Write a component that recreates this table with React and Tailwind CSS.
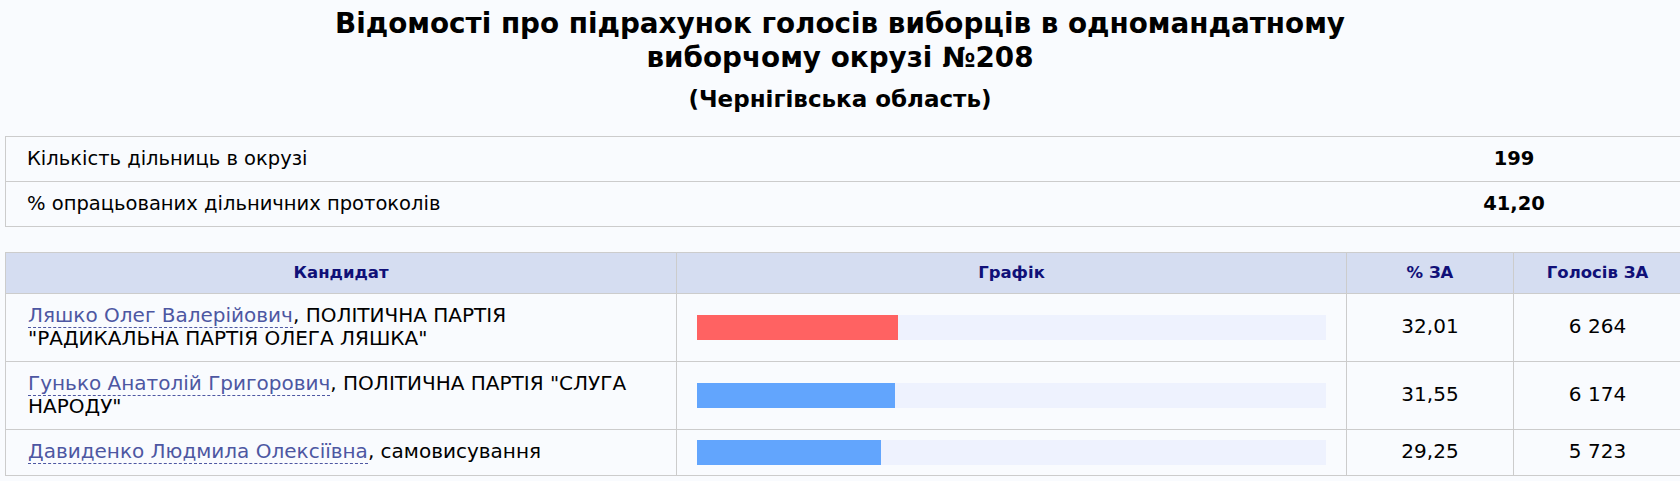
import React from 'react';

const candidates = [
  { name: 'Ляшко Олег Валерійович', party: 'ПОЛІТИЧНА ПАРТІЯ "РАДИКАЛЬНА ПАРТІЯ ОЛЕГА ЛЯШКА"', pct: 32.01, pctText: '32,01', votes: '6 264', color: 'bg-[#ff6262]' },
  { name: 'Гунько Анатолій Григорович', party: 'ПОЛІТИЧНА ПАРТІЯ "СЛУГА НАРОДУ"', pct: 31.55, pctText: '31,55', votes: '6 174', color: 'bg-[#62a5fd]' },
  { name: 'Давиденко Людмила Олексіївна', party: 'самовисування', pct: 29.25, pctText: '29,25', votes: '5 723', color: 'bg-[#62a5fd]' },
];

const App = () => {
  return (
    <div className="w-[1680px] min-h-screen overflow-hidden bg-[#f9fbfe] text-black font-['DejaVu_Sans',Verdana,sans-serif]">
      {/* Heading */}
      <h1 className="pt-[7px] text-center text-[27.8px] leading-[33.5px] font-bold">
        Відомості про підрахунок голосів виборців в одномандатному
        <br />
        виборчому окрузі №208
      </h1>
      <h2 className="mt-[13px] text-center text-[23px] leading-[24.5px] font-bold">(Чернігівська область)</h2>

      {/* Summary */}
      <table className="mt-[24px] ml-[5px] w-[1676px] table-fixed border-collapse text-[19.5px] leading-[24px]">
        <colgroup>
          <col className="w-[1341px]" />
          <col className="w-[335px]" />
        </colgroup>
        <tbody>
          <tr>
            <td className="border-y border-l border-[#cccccc] py-[10px] pl-[21px]">Кількість дільниць в окрузі</td>
            <td className="border-y border-[#cccccc] py-[10px] text-center font-bold">199</td>
          </tr>
          <tr>
            <td className="border-y border-l border-[#cccccc] py-[10px] pl-[21px]">% опрацьованих дільничних протоколів</td>
            <td className="border-y border-[#cccccc] py-[10px] text-center font-bold">41,20</td>
          </tr>
        </tbody>
      </table>

      {/* Results */}
      <table className="mt-[25px] ml-[5px] w-[1676px] table-fixed border-collapse text-[20px] leading-[23.5px]">
        <colgroup>
          <col className="w-[671px]" />
          <col className="w-[670px]" />
          <col className="w-[167px]" />
          <col className="w-[168px]" />
        </colgroup>
        <thead>
          <tr className="bg-[#d5ddf1] text-[#101078] text-[16.5px] font-bold">
            <th className="border border-[#cccccc] h-[41px]">Кандидат</th>
            <th className="border border-[#cccccc]">Графік</th>
            <th className="border border-[#cccccc]">% ЗА</th>
            <th className="border border-[#cccccc]">Голосів ЗА</th>
          </tr>
        </thead>
        <tbody>
          {candidates.map((c) => (
            <tr key={c.name}>
              <td className="border border-[#cccccc] py-[10px] pl-[22px] pr-[30px]">
                <a href="#" className="text-[#4d57a2] border-b border-dashed border-[#4d57a2]">{c.name}</a>, {c.party}
              </td>
              <td className="border border-[#cccccc] py-[10px] px-[20px]">
                <div className="h-[25px] bg-[#eef2fe]">
                  <div className={`h-full ${c.color}`} style={{ width: `${c.pct}%` }} />
                </div>
              </td>
              <td className="border border-[#cccccc] py-[10px] text-center">{c.pctText}</td>
              <td className="border border-[#cccccc] py-[10px] text-center">{c.votes}</td>
            </tr>
          ))}
        </tbody>
      </table>
    </div>
  );
};

export default App;
